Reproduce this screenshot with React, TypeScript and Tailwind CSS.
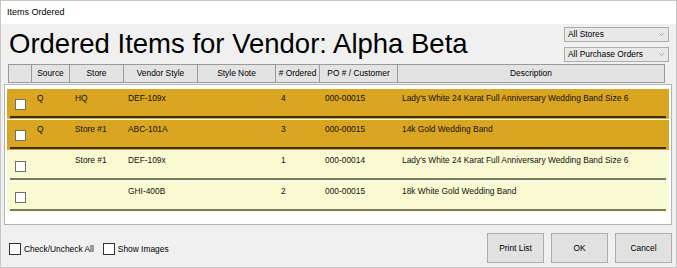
const columns = [
  { label: "", w: "w-[23px]" },
  { label: "Source", w: "w-[38px]" },
  { label: "Store", w: "w-[54px]" },
  { label: "Vendor Style", w: "w-[74px]" },
  { label: "Style Note", w: "w-[78px]" },
  { label: "# Ordered", w: "w-[44px]" },
  { label: "PO # / Customer", w: "w-[78px]" },
  { label: "Description", w: "flex-1" },
];

type Item = {
  source: string;
  store: string;
  style: string;
  qty: string;
  po: string;
  desc: string;
  highlight: boolean;
};

const items: Item[] = [
  { source: "Q", store: "HQ", style: "DEF-109x", qty: "4", po: "000-00015", desc: "Lady's White 24 Karat Full Anniversary Wedding Band Size 6", highlight: true },
  { source: "Q", store: "Store #1", style: "ABC-101A", qty: "3", po: "000-00015", desc: "14k Gold Wedding Band", highlight: true },
  { source: "", store: "Store #1", style: "DEF-109x", qty: "1", po: "000-00014", desc: "Lady's White 24 Karat Full Anniversary Wedding Band Size 6", highlight: false },
  { source: "", store: "", style: "GHI-400B", qty: "2", po: "000-00015", desc: "18k White Gold Wedding Band", highlight: false },
];

function Dropdown({ label }: { label: string }) {
  return (
    <div className="flex h-[15px] w-[105px] items-center justify-between border border-[#acacac] bg-[#e8e8e8] pl-[3px] pr-[4px]">
      <span className="text-[8.4px] leading-none">{label}</span>
      <svg width="5" height="3" viewBox="0 0 5 3">
        <path d="M0.5 0.5 L2.5 2.5 L4.5 0.5" stroke="#8a8a8a" strokeWidth="0.8" fill="none" />
      </svg>
    </div>
  );
}

function Row({ item }: { item: Item }) {
  const bg = item.highlight ? "bg-[#daa520]" : "bg-[#fafad2]";
  const line = item.highlight ? "bg-[#3d2d08]" : "bg-[#7a7a62]";
  return (
    <div className={`flex h-[30px] flex-col ${bg}`}>
      <div className="flex h-[27px] text-[8.4px] leading-[10px] text-[#111]">
        <div className="w-[24px] pl-[8px] pt-[10px]">
          <div className="h-[11px] w-[11px] border border-[#707070] bg-white" />
        </div>
        <div className="w-[38px] pl-[6px] pt-[4px]">{item.source}</div>
        <div className="w-[54px] pl-[6px] pt-[4px]">{item.store}</div>
        <div className="w-[74px] pl-[5px] pt-[4px]">{item.style}</div>
        <div className="w-[78px] pl-[6px] pt-[4px]"></div>
        <div className="w-[44px] pl-[6px] pt-[4px]">{item.qty}</div>
        <div className="w-[78px] pl-[6px] pt-[4px]">{item.po}</div>
        <div className="flex-1 pl-[5px] pt-[4px]">{item.desc}</div>
      </div>
      <div className={`mx-[3px] h-[2px] ${line}`} />
    </div>
  );
}

export default function App() {
  return (
    <div className="flex h-[268px] w-[677px] flex-col border border-[#c6c6c6] bg-[#f0f0f0] font-['Liberation_Sans',Arial,sans-serif] text-black">
      {/* Title bar */}
      <div className="flex h-[23px] items-center bg-white pl-[6px] text-[9px]">Items Ordered</div>

      {/* Heading + filters */}
      <div className="flex h-[40px] justify-between">
        <div className="pl-[8px] pt-[4px] text-[27.5px] leading-[31px]">Ordered Items for Vendor: Alpha Beta</div>
        <div className="flex flex-col gap-[5px] pr-[7px] pt-[3px]">
          <Dropdown label="All Stores" />
          <Dropdown label="All Purchase Orders" />
        </div>
      </div>

      {/* Column headers */}
      <div className="ml-[7px] flex h-[19px] w-[657px] border border-[#9a9a9a] bg-[#e3e3e3]">
        {columns.map((c, i) => (
          <div
            key={i}
            className={`${c.w} flex items-center justify-center text-[8.4px] ${i < columns.length - 1 ? "border-r border-[#9a9a9a]" : ""}`}
          >
            {c.label}
          </div>
        ))}
      </div>

      {/* Grid */}
      <div className="ml-[3px] mt-[1px] flex h-[141px] w-[668px] flex-col gap-[1px] border border-[#b4b4b4] bg-white px-[2px] pt-[4px]">
        {items.map((it, i) => (
          <Row key={i} item={it} />
        ))}
      </div>

      {/* Footer */}
      <div className="flex h-[42px] justify-between">
        <div className="flex items-center gap-[3px] pl-[8px] pt-[18px] self-start text-[8.4px]">
          <div className="h-[12px] w-[12px] border border-[#333] bg-white" />
          <span className="mr-[6px]">Check/Uncheck All</span>
          <div className="h-[12px] w-[12px] border border-[#333] bg-white" />
          <span>Show Images</span>
        </div>
        <div className="flex gap-[7px] pr-[4px] pt-[8px]">
          {["Print List", "OK", "Cancel"].map((b) => (
            <div
              key={b}
              className="flex h-[30px] w-[57px] items-center justify-center border border-[#adadad] bg-[#e1e1e1] text-[8.4px]"
            >
              {b}
            </div>
          ))}
        </div>
      </div>
    </div>
  );
}
